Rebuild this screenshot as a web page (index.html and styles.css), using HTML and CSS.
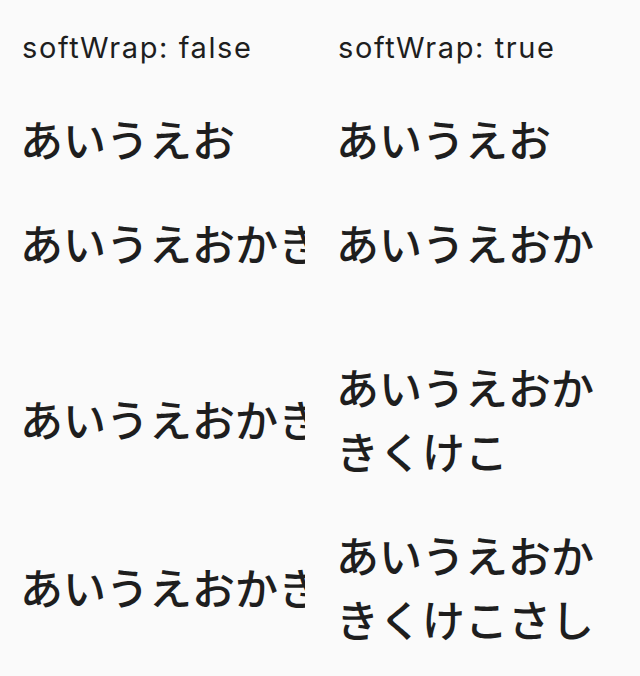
FILE: index.html
```html
<!DOCTYPE html>
<html lang="ja">
<head>
<meta charset="utf-8">
<link rel="stylesheet" href="styles.css">
</head>
<body>
<main class="page">
  <div class="row head">
    <div class="cell label">softWrap: false</div>
    <div class="cell label">softWrap: true</div>
  </div>
  <div class="row">
    <div class="cell jp nowrap">あいうえお</div>
    <div class="cell jp">あいうえお</div>
  </div>
  <div class="row">
    <div class="cell jp nowrap">あいうえおかき</div>
    <div class="cell jp nowrap">あいうえおか</div>
  </div>
  <div class="row wide-gap">
    <div class="cell jp nowrap">あいうえおかき</div>
    <div class="cell jp">あいうえおかきくけこ</div>
  </div>
  <div class="row">
    <div class="cell jp nowrap">あいうえおかき</div>
    <div class="cell jp">あいうえおかきくけこさし</div>
  </div>
</main>
</body>
</html>
```

FILE: styles.css
```css
html, body {
  margin: 0;
  padding: 0;
  background: #fafafa;
}
.page {
  width: 640px;
  height: 676px;
  box-sizing: border-box;
  padding: 30px 19px 0 22px;
  display: flex;
  flex-direction: column;
  gap: 40px;
  color: #1e1e1e;
  overflow: hidden;
}
.row {
  display: grid;
  grid-template-columns: 283px 283px;
  column-gap: 33px;
  align-items: center;
}
.row.wide-gap {
  margin-top: 40px;
}
.cell {
  overflow: hidden;
}
.label {
  font-family: Inter, Roboto, sans-serif;
  font-size: 29px;
  line-height: 36px;
  letter-spacing: 1.6px;
  white-space: nowrap;
}
.jp {
  font-family: "Noto Sans CJK JP", sans-serif;
  font-size: 43px;
  font-weight: 500;
  line-height: 64px;
  margin-left: -2px;
}
.nowrap {
  white-space: nowrap;
}
```
